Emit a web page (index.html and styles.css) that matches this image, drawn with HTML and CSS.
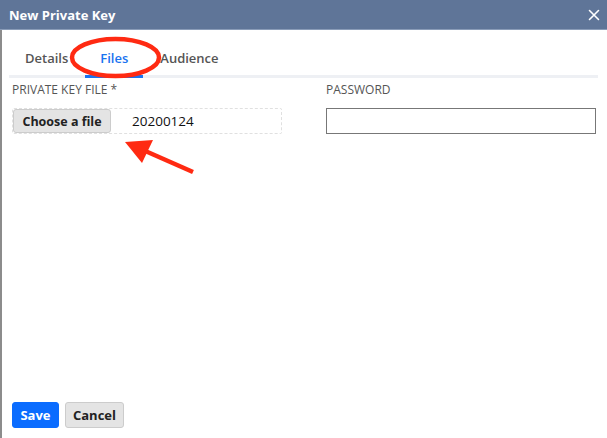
FILE: index.html
```html
<!DOCTYPE html>
<html lang="en">
<head>
  <meta charset="UTF-8">
  <title>New Private Key</title>
  <link rel="stylesheet" href="styles.css">
</head>
<body>
  <div class="dialog">
    <div class="dialog-header">
      <span class="dialog-title">New Private Key</span>
      <svg class="close" width="12" height="12" viewBox="0 0 12 12"><path d="M1.5 1.5l9 9M10.5 1.5l-9 9" stroke="#fff" stroke-width="1.6" stroke-linecap="round"/></svg>
    </div>
    <div class="dialog-body">
      <div class="tabs">
        <div class="tab">Details</div>
        <div class="tab active">Files</div>
        <div class="tab">Audience</div>
      </div>
      <div class="form">
        <div class="field">
          <label>PRIVATE KEY FILE *</label>
          <div class="file-box">
            <button class="btn">Choose a file</button>
            <span class="file-name">20200124</span>
          </div>
        </div>
        <div class="field">
          <label>PASSWORD</label>
          <input class="text-input" type="password">
        </div>
      </div>
      <div class="footer">
        <button class="btn primary">Save</button>
        <button class="btn">Cancel</button>
      </div>
    </div>
    <!-- annotation markup drawn over the dialog -->
    <svg class="notes" width="607" height="438" viewBox="0 0 607 438">
      <ellipse cx="115.5" cy="57.5" rx="43.5" ry="18.5" fill="none" stroke="#ff2a12" stroke-width="4.5"/>
      <line x1="193" y1="172" x2="143" y2="150" stroke="#ff2a12" stroke-width="4.5"/>
      <polygon points="125,142 153,140 142,163" fill="#ff2a12"/>
    </svg>
  </div>
</body>
</html>
```
FILE: styles.css
```css
html, body { margin:0; padding:0; height:100%; background:#fff; font-family:"Open Sans",Arial,sans-serif; }
.dialog { position:relative; display:flex; flex-direction:column; width:607px; height:438px; overflow:hidden; }
.dialog-header { display:flex; align-items:center; justify-content:space-between; height:29px; padding:0 7px 0 9px; background:#5f7598; border-bottom:1px solid #8a9cb8; }
.dialog-title { color:#fff; font-weight:bold; font-size:13px; }
.close { margin-top:1px; }
.dialog-body { flex:1; display:flex; flex-direction:column; border-left:2px solid #8c8c8c; padding:0 9px 10px 7px; }
.tabs { display:flex; gap:2px; margin-top:11px; padding-left:1px; border-bottom:3px solid #eef0f4; }
.tab { padding:8px 15px 8px; margin-bottom:-3px; border-bottom:3px solid transparent; font-size:13px; font-weight:600; color:#555; }
.tab.active { color:#1a73f0; border-bottom-color:#1a73f0; }
.form { display:grid; grid-template-columns:270px 270px; column-gap:44px; padding:3px 3px 0; }
.field label { display:block; font-size:12px; color:#555; line-height:17px; margin-bottom:10px; }
.file-box { box-sizing:border-box; display:flex; align-items:flex-end; height:26px; border:1px dashed #e0e0e0; border-radius:2px; }
.file-name { align-self:center; margin-left:21px; font-size:13.5px; color:#111; }
.text-input { box-sizing:border-box; width:270px; height:26px; border:1px solid #777; margin:0; }
.btn { height:24px; padding:0 9px; font-family:inherit; font-size:13px; font-weight:bold; color:#222; background:#e4e4e4; border:1px solid #ccc; border-radius:3px; white-space:nowrap; }
.file-box .btn { width:98px; height:24px; padding:0; font-size:12.5px; }
.footer { margin-top:auto; display:flex; gap:6px; padding-left:3px; }
.footer .btn { height:26px; }
.btn.primary { background:#0a6cff; border-color:#0a6cff; color:#fff; width:47px; padding:0; }
.footer .btn + .btn { width:59px; padding:0; }
.notes { position:absolute; left:0; top:0; pointer-events:none; }
```
